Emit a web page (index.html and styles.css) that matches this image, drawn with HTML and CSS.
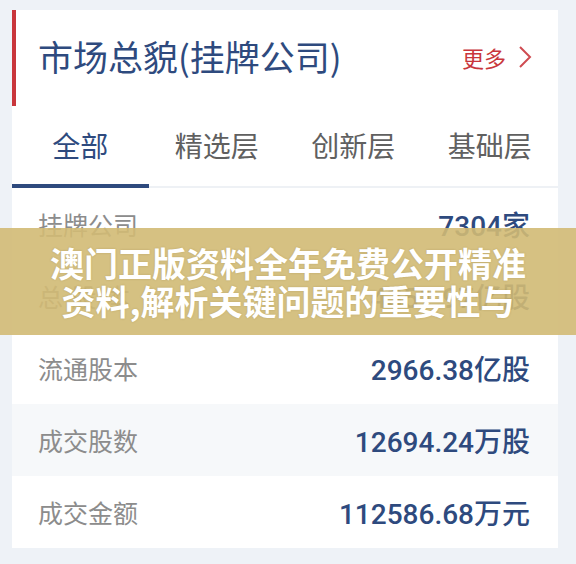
FILE: index.html
```html
<!DOCTYPE html>
<html lang="zh-CN">
<head>
    <meta charset="UTF-8">
    <meta name="viewport" content="width=device-width, initial-scale=1.0">
    <title>市场总貌</title>
    <link rel="stylesheet" href="styles.css">
</head>
<body>

    <div class="card">
        <!-- Header -->
        <div class="card-head">
            <h1 class="title">市场总貌(挂牌公司)</h1>
            <a class="more" href="#">更多
                <svg width="14" height="24" viewBox="0 0 14 24"><path d="M2 2 L12 12 L2 22" fill="none" stroke="#cf4b51" stroke-width="2"/></svg>
            </a>
        </div>

        <!-- Tabs -->
        <div class="tabs">
            <div class="tab active">全部</div>
            <div class="tab">精选层</div>
            <div class="tab">创新层</div>
            <div class="tab">基础层</div>
        </div>

        <!-- Stats -->
        <ul class="stats">
            <li class="row"><span class="label">挂牌公司</span><span class="value">7304家</span></li>
            <li class="row"><span class="label label-wide">总股本</span><span class="value">4351.97亿股</span></li>
            <li class="row"><span class="label">流通股本</span><span class="value">2966.38亿股</span></li>
            <li class="row"><span class="label">成交股数</span><span class="value">12694.24万股</span></li>
            <li class="row"><span class="label">成交金额</span><span class="value">112586.68万元</span></li>
        </ul>
    </div>

    <!-- Overlay banner -->
    <div class="banner">
        <p>澳门正版资料全年免费公开精准<br>资料,解析关键问题的重要性与</p>
    </div>

</body>
</html>
```

FILE: styles.css
```css
body {
    margin: 0;
    padding: 10px 18px 16px 12px;
    background-color: #eef2f7;
    font-family: "Noto Sans CJK SC", sans-serif;
}
.card {
    background-color: #fff;
}
.card-head {
    height: 96px;
    box-sizing: border-box;
    border-left: 4px solid #c9363c;
    padding: 0 26px 6px 22px;
    display: flex;
    align-items: center;
    justify-content: space-between;
}
.title {
    margin: 0;
    font-size: 35px;
    font-weight: 400;
    color: #2e4a7e;
}
.more {
    display: flex;
    align-items: center;
    gap: 12px;
    font-size: 22px;
    color: #c9363c;
    text-decoration: none;
    margin-top: 4px;
}
.tabs {
    display: flex;
    height: 82px;
    border-bottom: 2px solid #eef1f5;
    box-sizing: border-box;
}
.tab {
    flex: 1;
    display: flex;
    align-items: center;
    justify-content: center;
    font-size: 28px;
    color: #606060;
    margin-bottom: -2px;
    border-bottom: 4px solid transparent;
}
.tab.active {
    color: #2e4a7e;
    border-bottom-color: #2e4a7e;
}
.stats {
    list-style: none;
    margin: 0;
    padding: 0;
}
.row {
    height: 72px;
    padding: 0 28px 0 26px;
    display: flex;
    align-items: center;
    justify-content: space-between;
}
.row:nth-child(even) {
    background-color: #f6f8fa;
}
.label {
    font-size: 25px;
    color: #8c8c8c;
}
.label-wide {
    letter-spacing: 0.34em;
}
.value {
    font-family: Roboto, "Noto Sans CJK SC", sans-serif;
    font-size: 28px;
    font-weight: 500;
    color: #2e4a7e;
}
.banner {
    position: absolute;
    left: 0;
    top: 228px;
    width: 100%;
    height: 107px;
    background-color: rgba(210, 186, 116, 0.9);
    display: flex;
    align-items: center;
    justify-content: center;
}
.banner p {
    margin: 0;
    text-align: center;
    color: #fff;
    font-size: 34px;
    font-weight: 700;
    line-height: 38px;
    text-shadow: 0 0 2px rgba(120, 100, 40, 0.3);
}
```
